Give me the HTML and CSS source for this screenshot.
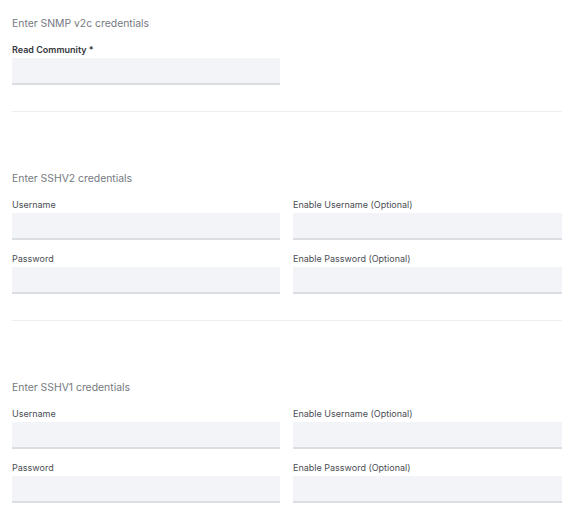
FILE: index.html
```html
<!DOCTYPE html>
<html>
<head>
<meta charset="utf-8">
<link rel="stylesheet" href="styles.css">
</head>
<body>
<div class="page">
  <section class="section first">
    <div class="title">Enter SNMP v2c credentials</div>
    <div class="grid">
      <div class="field">
        <label class="label strong">Read Community *</label>
        <div class="input"></div>
      </div>
    </div>
  </section>
  <hr class="divider">
  <section class="section">
    <div class="title">Enter SSHV2 credentials</div>
    <div class="grid">
      <div class="field"><label class="label">Username</label><div class="input"></div></div>
      <div class="field"><label class="label">Enable Username (Optional)</label><div class="input"></div></div>
      <div class="field"><label class="label">Password</label><div class="input"></div></div>
      <div class="field"><label class="label">Enable Password (Optional)</label><div class="input"></div></div>
    </div>
  </section>
  <hr class="divider">
  <section class="section">
    <div class="title">Enter SSHV1 credentials</div>
    <div class="grid">
      <div class="field"><label class="label">Username</label><div class="input"></div></div>
      <div class="field"><label class="label">Enable Username (Optional)</label><div class="input"></div></div>
      <div class="field"><label class="label">Password</label><div class="input"></div></div>
      <div class="field"><label class="label">Enable Password (Optional)</label><div class="input"></div></div>
    </div>
  </section>
</div>
</body>
</html>
```
FILE: styles.css
```css
html, body {
  margin: 0;
  padding: 0;
  background: #ffffff;
}
body {
  font-family: Inter, "Liberation Sans", sans-serif;
  color: #3d4045;
}
.page {
  width: 550px;
  padding: 18px 10px 0 12px;
}
.section {
  display: flex;
  flex-direction: column;
}
.title {
  font-size: 10.4px;
  line-height: 12px;
  color: #75797f;
  margin-bottom: 15px;
}
.grid {
  display: grid;
  grid-template-columns: 268px 269px;
  column-gap: 13px;
  row-gap: 14px;
}
.field {
  display: flex;
  flex-direction: column;
}
.label {
  font-size: 9px;
  line-height: 10px;
  color: #4a4d53;
  margin-bottom: 3px;
}
.label.strong {
  font-weight: 600;
  color: #34373c;
}
.input {
  height: 25px;
  background: #f2f4f7;
  border-bottom: 2px solid #dadde2;
}
.divider {
  border: 0;
  height: 1px;
  background: #eeeff1;
  margin: 26px 0 61px 0;
}
```
